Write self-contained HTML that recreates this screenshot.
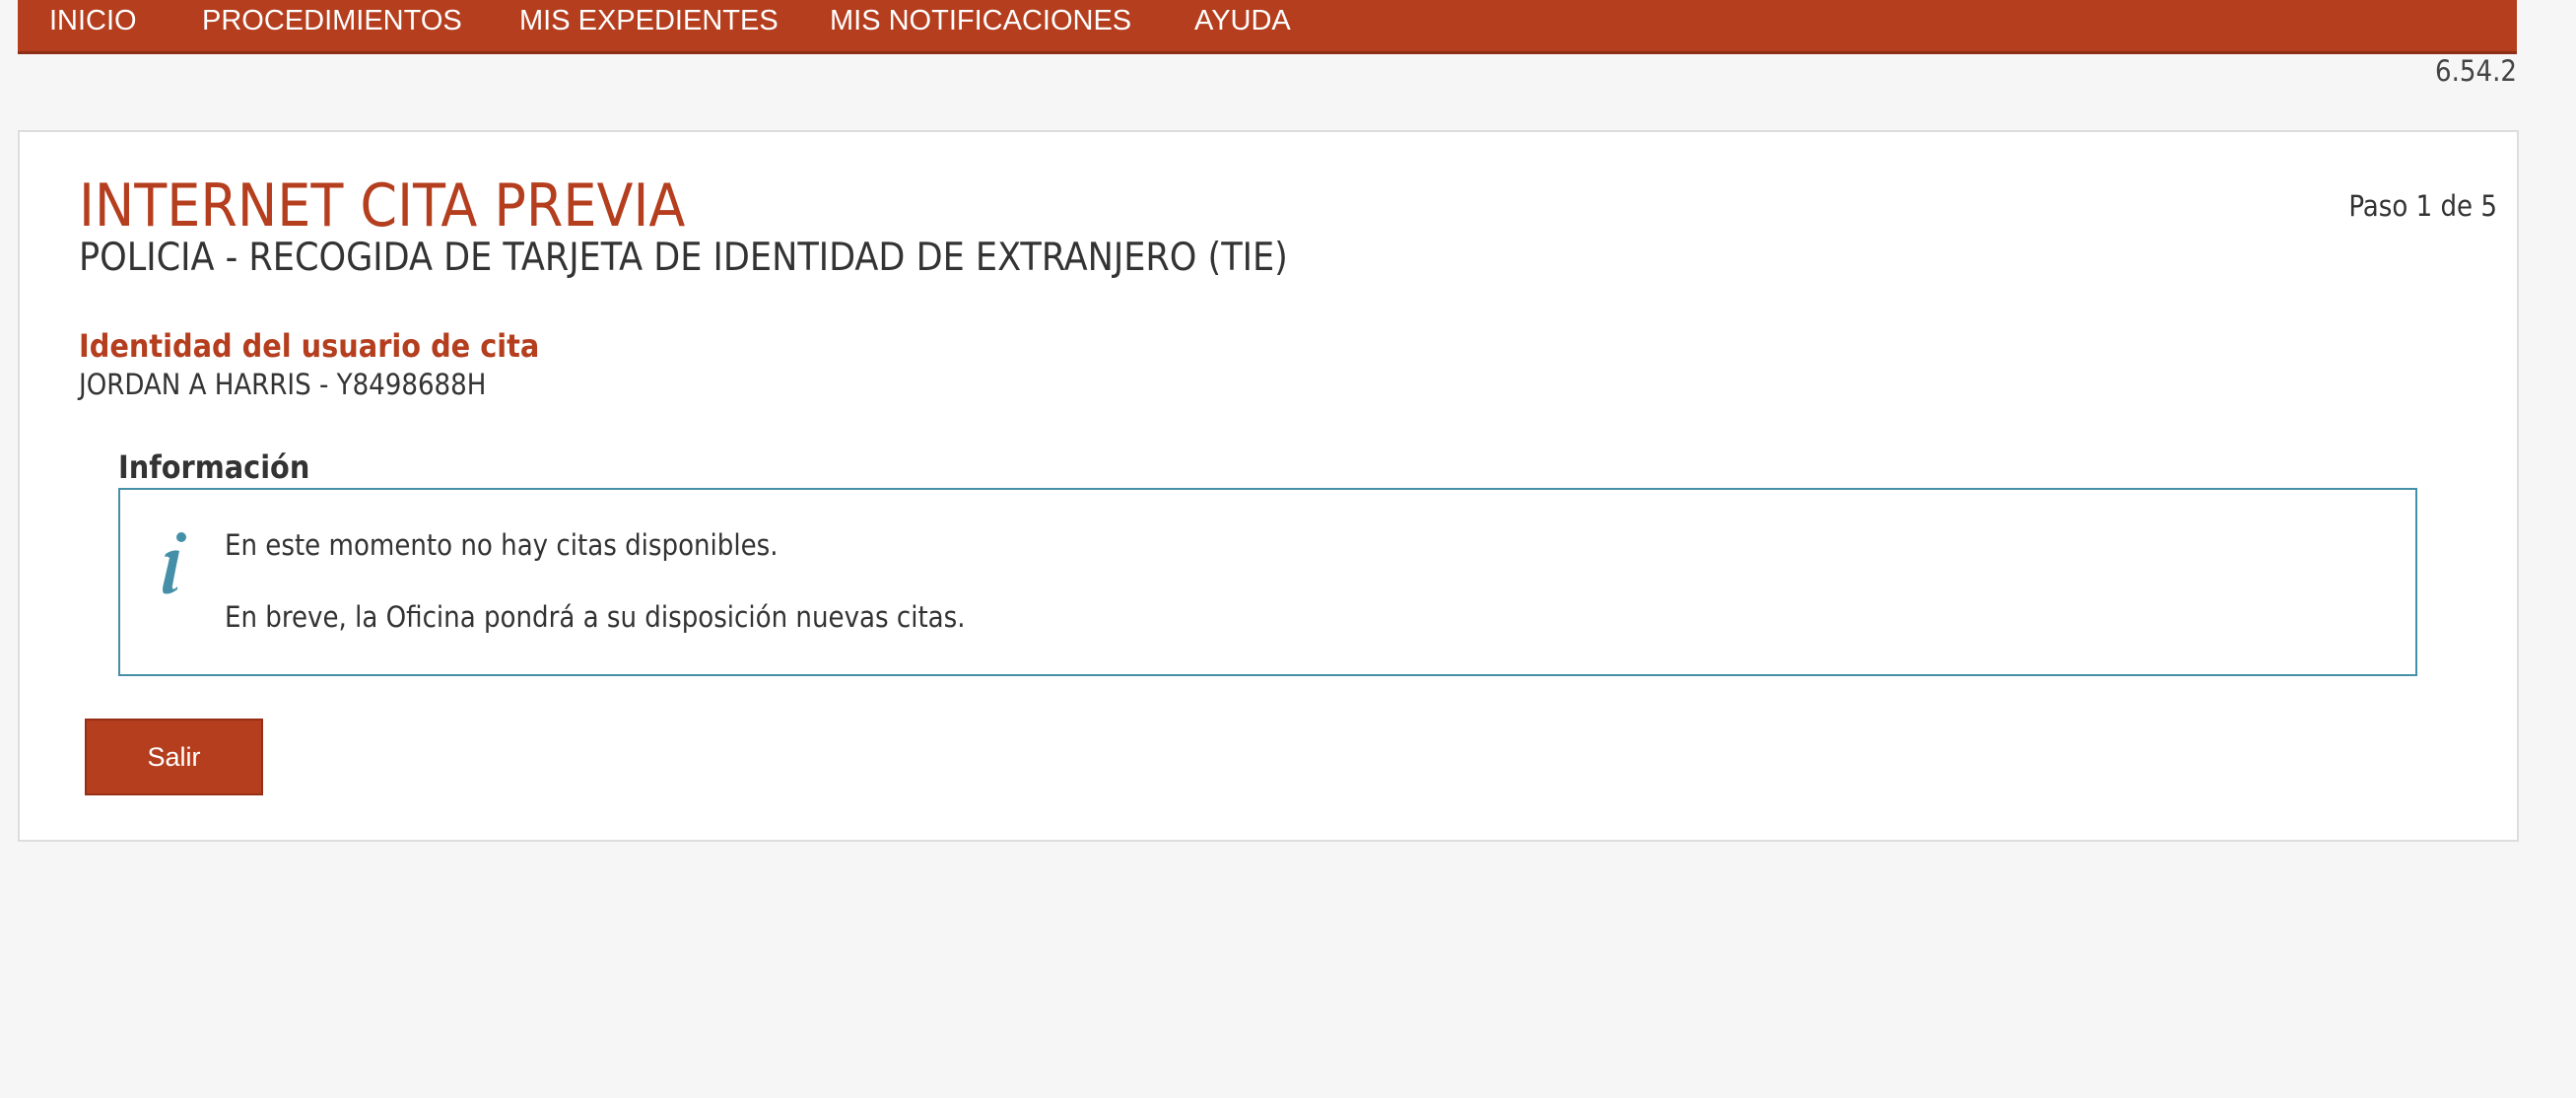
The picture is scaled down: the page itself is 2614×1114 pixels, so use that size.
<!DOCTYPE html>
<html><head><meta charset="utf-8"><style>
body{margin:0;width:2614px;height:1114px;background:#f6f6f6;font-family:"DejaVu Sans Condensed","DejaVu Sans","Liberation Sans",sans-serif;color:#333;position:relative;overflow:hidden}
.nav{position:absolute;left:18px;top:0;width:2536px;height:52px;background:#b43e1e;border-bottom:3px solid #8f2e16}
.nav span{position:absolute;top:0;line-height:42px;color:#fff;font-family:"Liberation Sans",sans-serif;font-size:29px}
.ver{position:absolute;right:60px;top:55px;font-size:29px;color:#444}
.card{position:absolute;left:18px;top:132px;width:2534px;height:718px;background:#fff;border:2px solid #ddd}
.a{position:absolute;white-space:nowrap}
.btn{position:absolute;left:86px;top:729px;width:177px;height:74px;background:#b43e1e;border:2px solid #962f15;color:#fff;font-family:"Liberation Sans",sans-serif;font-size:27px;text-align:center;line-height:74px}
</style></head><body>
<div class="nav">
<span style="left:32px">INICIO</span>
<span style="left:187px">PROCEDIMIENTOS</span>
<span style="left:509px">MIS EXPEDIENTES</span>
<span style="left:824px">MIS NOTIFICACIONES</span>
<span style="left:1194px">AYUDA</span>
</div>
<div class="ver">6.54.2</div>
<div class="card"></div>
<div class="a" style="left:80px;top:174px;font-size:60px;color:#b43e1e">INTERNET CITA PREVIA</div>
<div class="a" style="left:80px;top:239px;font-size:39px;color:#333">POLICIA - RECOGIDA DE TARJETA DE IDENTIDAD DE EXTRANJERO (TIE)</div>
<div class="a" style="right:80px;top:192px;font-size:29px;color:#333">Paso 1 de 5</div>
<div class="a" style="left:80px;top:332px;font-size:32px;font-weight:bold;color:#b43e1e">Identidad del usuario de cita</div>
<div class="a" style="left:80px;top:373px;font-size:29px;color:#333">JORDAN A HARRIS - Y8498688H</div>
<div class="a" style="left:120px;top:455px;font-size:32px;font-weight:bold;color:#333">Información</div>
<div style="position:absolute;left:120px;top:495px;width:2329px;height:187px;border:2px solid #4590a8;background:#fff"></div>
<svg style="position:absolute;left:158px;top:538px" width="36" height="68" viewBox="0 0 36 68">
<circle cx="26" cy="7" r="5" fill="#4590a8"/>
<path d="M10 24 Q18 19 24 21 Q20 40 17 56 Q16 61 20 59 L22 57 L22 60 Q14 66 8 64 Q6 61 8 54 L14 28 Q12 26 9 27 Z" fill="#4590a8"/>
</svg>
<div class="a" style="left:228px;top:536px;font-size:29px;color:#333">En este momento no hay citas disponibles.</div>
<div class="a" style="left:228px;top:609px;font-size:29px;color:#333">En breve, la Oficina pondrá a su disposición nuevas citas.</div>
<div class="btn">Salir</div>
</body></html>
